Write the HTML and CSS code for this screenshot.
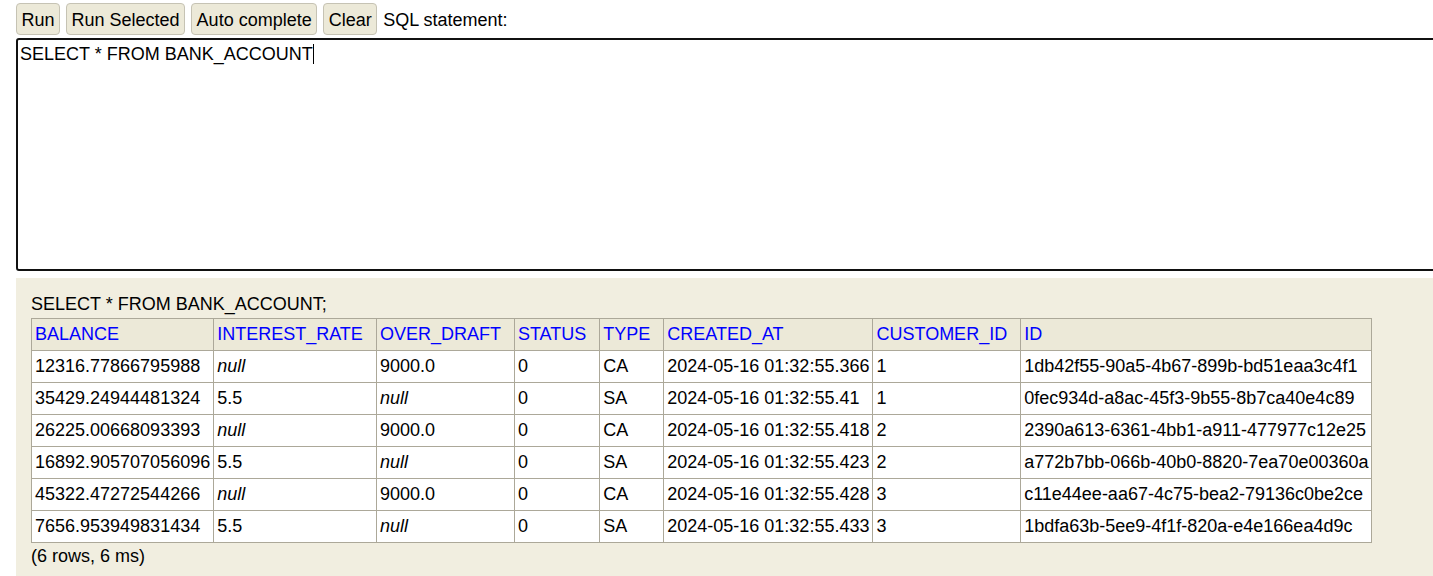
FILE: index.html
```html
<!DOCTYPE html>
<html>
<head>
<meta charset="utf-8">
<link rel="stylesheet" href="styles.css">
<title>H2 Console</title>
</head>
<body>
<div class="toolbar"><span class="btn">Run</span><span class="btn">Run Selected</span><span class="btn">Auto complete</span><span class="btn">Clear</span><span class="label">SQL statement:</span></div>
<div class="editor">SELECT * FROM BANK_ACCOUNT<span class="caret"></span></div>
<div class="result">
  <div class="stmt">SELECT * FROM BANK_ACCOUNT;</div>
  <table class="grid">
    <tr><th><a>BALANCE</a></th><th><a>INTEREST_RATE</a></th><th><a>OVER_DRAFT</a></th><th><a>STATUS</a></th><th><a>TYPE</a></th><th><a>CREATED_AT</a></th><th><a>CUSTOMER_ID</a></th><th><a>ID</a></th></tr>
    <tr><td>12316.77866795988</td><td><i>null</i></td><td>9000.0</td><td>0</td><td>CA</td><td>2024-05-16 01:32:55.366</td><td>1</td><td>1db42f55-90a5-4b67-899b-bd51eaa3c4f1</td></tr>
    <tr><td>35429.24944481324</td><td>5.5</td><td><i>null</i></td><td>0</td><td>SA</td><td>2024-05-16 01:32:55.41</td><td>1</td><td>0fec934d-a8ac-45f3-9b55-8b7ca40e4c89</td></tr>
    <tr><td>26225.00668093393</td><td><i>null</i></td><td>9000.0</td><td>0</td><td>CA</td><td>2024-05-16 01:32:55.418</td><td>2</td><td>2390a613-6361-4bb1-a911-477977c12e25</td></tr>
    <tr><td>16892.905707056096</td><td>5.5</td><td><i>null</i></td><td>0</td><td>SA</td><td>2024-05-16 01:32:55.423</td><td>2</td><td>a772b7bb-066b-40b0-8820-7ea70e00360a</td></tr>
    <tr><td>45322.47272544266</td><td><i>null</i></td><td>9000.0</td><td>0</td><td>CA</td><td>2024-05-16 01:32:55.428</td><td>3</td><td>c11e44ee-aa67-4c75-bea2-79136c0be2ce</td></tr>
    <tr><td>7656.953949831434</td><td>5.5</td><td><i>null</i></td><td>0</td><td>SA</td><td>2024-05-16 01:32:55.433</td><td>3</td><td>1bdfa63b-5ee9-4f1f-820a-e4e166ea4d9c</td></tr>
  </table>
  <div class="info">(6 rows, 6 ms)</div>
</div>
</body>
</html>
```
FILE: styles.css
```css
html, body {
  margin: 0;
  padding: 0;
  background: #ffffff;
  overflow: hidden;
}
body {
  font-family: "Liberation Sans", Arial, sans-serif;
  font-size: 18px;
  color: #000;
}
.toolbar {
  display: flex;
  align-items: baseline;
  gap: 6px;
  padding: 3px 0 0 16px;
  white-space: nowrap;
}
.btn {
  display: inline-block;
  background: #ece9d8;
  border: 1px solid #c6c3b4;
  border-radius: 4px;
  padding: 6px 4.5px 4px 4.5px;
  line-height: 20px;
}
.label {
  line-height: 20px;
}
.editor {
  margin: 3px 0 0 16px;
  width: 1440px;
  height: 233px;
  box-sizing: border-box;
  border: 2px solid #111;
  border-radius: 3px;
  padding: 4px 2px 3px 2px;
  line-height: 21px;
  white-space: nowrap;
}
.caret {
  display: inline-block;
  width: 0;
  height: 20px;
  border-left: 1.5px solid #000;
  vertical-align: -4px;
}
.result {
  margin: 7px 0 0 16px;
  background: #f1eee0;
  padding: 16px 0 40px 15px;
  min-height: 300px;
}
.stmt {
  line-height: 21px;
  margin-bottom: 3px;
}
.grid {
  border-collapse: collapse;
}
.grid th, .grid td {
  border: 1px solid #aca899;
  padding: 5px 3px;
  line-height: 21px;
  text-align: left;
  vertical-align: top;
  white-space: nowrap;
}
.grid th {
  background: #ece9d8;
  font-weight: normal;
  padding-right: 13px;
}
.grid th a {
  color: #0000ff;
  text-decoration: none;
}
.grid td {
  background: #ffffff;
}
.info {
  margin-top: 3px;
  line-height: 21px;
}
```
